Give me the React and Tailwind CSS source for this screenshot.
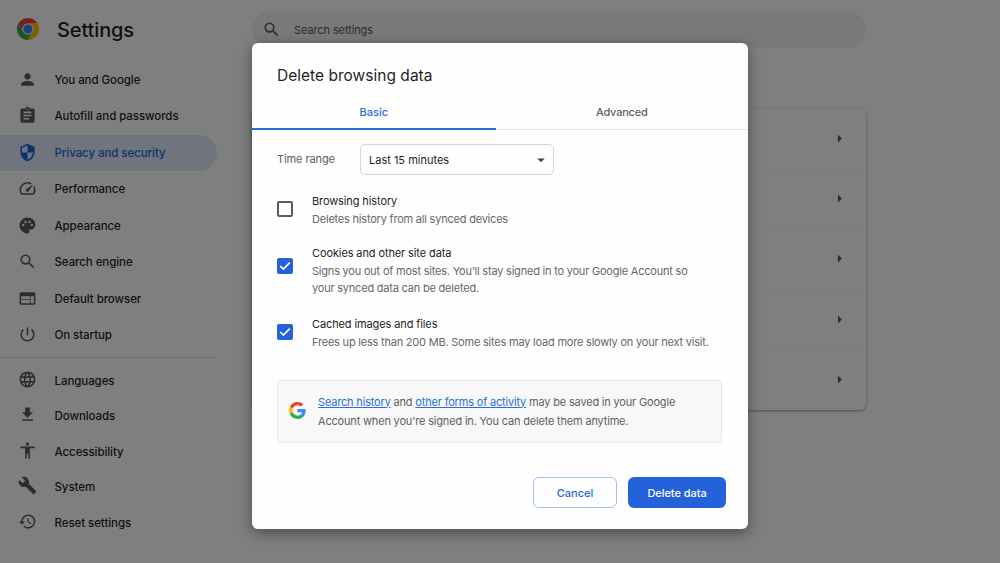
import React from 'react';
import {
  MdPerson,
  MdAssignment,
  MdSecurity,
  MdSpeed,
  MdPalette,
  MdSearch,
  MdWeb,
  MdPowerSettingsNew,
  MdLanguage,
  MdFileDownload,
  MdAccessibility,
  MdBuild,
  MdHistory,
  MdArrowDropDown,
  MdArrowRight,
} from 'react-icons/md';

const mainItems = [
  { label: 'You and Google', icon: MdPerson },
  { label: 'Autofill and passwords', icon: MdAssignment },
  { label: 'Privacy and security', icon: MdSecurity, active: true },
  { label: 'Performance', icon: MdSpeed },
  { label: 'Appearance', icon: MdPalette },
  { label: 'Search engine', icon: MdSearch },
  { label: 'Default browser', icon: MdWeb },
  { label: 'On startup', icon: MdPowerSettingsNew },
];

const moreItems = [
  { label: 'Languages', icon: MdLanguage },
  { label: 'Downloads', icon: MdFileDownload },
  { label: 'Accessibility', icon: MdAccessibility },
  { label: 'System', icon: MdBuild },
  { label: 'Reset settings', icon: MdHistory },
];

const ChromeLogo = () => (
  <svg viewBox="0 0 48 48" className="mb-1 h-[22px] w-[22px]">
    <path fill="#ea4335" d="M24 12h20.8A24 24 0 0 0 3.2 12l10.4 18A12 12 0 0 1 24 12z" />
    <path fill="#34a853" d="M34.4 30 24 48A24 24 0 0 1 3.2 12l10.4 18a12 12 0 0 0 20.8 0z" />
    <path fill="#fbbc04" d="M24 12h20.8A24 24 0 0 1 24 48l10.4-18A12 12 0 0 0 24 12z" />
    <circle cx="24" cy="24" r="12" fill="#e8f0fe" />
    <circle cx="24" cy="24" r="9.8" fill="#3b82f0" />
  </svg>
);

const GoogleLogo = () => (
  <svg viewBox="0 0 48 48" className="mb-[3px] h-[17px] w-[17px] shrink-0">
    <path fill="#ea4335" d="M24 9.5c3.54 0 6.71 1.22 9.21 3.6l6.85-6.85C35.9 2.38 30.47 0 24 0 14.62 0 6.51 5.38 2.56 13.22l7.98 6.19C12.43 13.72 17.74 9.5 24 9.5z" />
    <path fill="#4285f4" d="M46.98 24.55c0-1.57-.15-3.09-.38-4.55H24v9.02h12.94c-.58 2.96-2.26 5.48-4.78 7.18l7.73 6c4.51-4.18 7.09-10.36 7.09-17.65z" />
    <path fill="#fbbc05" d="M10.53 28.59c-.48-1.45-.76-2.99-.76-4.59s.27-3.14.76-4.59l-7.98-6.19C.92 16.46 0 20.12 0 24c0 3.88.92 7.54 2.56 10.78l7.97-6.19z" />
    <path fill="#34a853" d="M24 48c6.48 0 11.93-2.13 15.89-5.81l-7.73-6c-2.15 1.45-4.92 2.3-8.16 2.3-6.26 0-11.57-4.22-13.47-9.91l-7.98 6.19C6.51 42.62 14.62 48 24 48z" />
  </svg>
);

const NavItem = ({ item, iconMargin }) => {
  const Icon = item.icon;
  return (
    <div
      className={`flex h-[35.5px] items-center ${
        item.active ? 'w-[217px] rounded-r-full bg-[#dfe9fb] text-[#1b66dd]' : 'text-[#1f1f1f]'
      }`}
    >
      <Icon
        className={`${iconMargin} ml-[18px] mr-[17.5px] h-[19px] w-[19px] ${item.active ? '' : 'text-[#5a5a5a]'}`}
      />
      <span className="pt-px">{item.label}</span>
    </div>
  );
};

const Checkbox = ({ checked }) => (
  <div
    className={`flex h-4 w-4 shrink-0 items-center justify-center rounded-[2px] ${
      checked ? 'bg-[#2462dc]' : 'border-2 border-[#5a5a5a]'
    }`}
  >
    {checked && (
      <svg viewBox="0 0 16 16" className="h-4 w-4" fill="none" stroke="#fff" strokeWidth="1.7">
        <path d="M3.2 8l3.2 3.1L12.8 4.6" />
      </svg>
    )}
  </div>
);

const Option = ({ title, checked, children }) => (
  <>
    <Checkbox checked={checked} />
    <div className="whitespace-nowrap text-[11px]">
      <div className="leading-[18px] tracking-[-0.11px] text-[#1f1f1f]">{title}</div>
      <div className="pt-px leading-[17px] tracking-[-0.21px] text-[#66676b]">{children}</div>
    </div>
  </>
);

const Sidebar = () => (
  <div className="w-[252px] shrink-0 text-[11.5px] font-medium tracking-[-0.07px]">
    <div className="flex h-[62px] items-center pl-[17px]">
      <ChromeLogo />
      <h1 className="mb-[2px] ml-[18px] text-[20px] font-medium tracking-[-0.12px] text-[#1f1f1f]">Settings</h1>
    </div>
    <div className="flex flex-col gap-px">
      {mainItems.map((item) => (
        <NavItem key={item.label} item={item} iconMargin="mb-px" />
      ))}
    </div>
    <div className="mt-[4px] h-px w-[216px] bg-[#dcdcdc]" />
    <div className="mt-[5px]">
      {moreItems.map((item) => (
        <NavItem key={item.label} item={item} iconMargin="mb-[3px]" />
      ))}
    </div>
  </div>
);

const Dialog = () => (
  <div className="absolute left-[251.5px] top-[43px] flex h-[486px] w-[496px] flex-col rounded-[6px] bg-[#fefefe] pl-[25.5px] shadow-[0_4px_14px_rgba(0,0,0,0.4)]">
    <h2 className="mt-[22px] text-[15.5px] leading-[22px] tracking-[0.02px] text-[#1f1f1f]">Delete browsing data</h2>

    {/* Tabs */}
    <div className="-ml-[25.5px] mt-[8px] flex h-[35px] text-center text-[11px] font-medium leading-[34px]">
      <div className="w-[244.5px] border-b-2 border-[#2b6edb] text-[#2b6edb]">Basic</div>
      <div className="flex-1 border-b border-[#e2e2e2] tracking-[-0.2px] text-[#5f6064]">Advanced</div>
    </div>

    <div className="mt-[14px] flex items-center text-[11px]">
      <span className="w-[83px] tracking-[-0.1px] text-[#5f6064]">Time range</span>
      <div className="flex h-[31px] w-[194px] items-center justify-between rounded-[5px] border border-[#d6d6d6] pl-2 pr-[3px] text-[#1f1f1f]">
        <span className="pt-px">Last 15 minutes</span>
        <MdArrowDropDown className="h-[18px] w-[18px] text-[#444]" />
      </div>
    </div>

    <div className="mt-[17px] flex h-[36px] gap-[19px] [&>:first-child]:mt-[9px]">
      <Option title="Browsing history">Deletes history from all synced devices</Option>
    </div>
    <div className="mt-[16px] flex h-[52px] gap-[19px] [&>:first-child]:mt-[14px]">
      <Option title="Cookies and other site data" checked>
        Signs you out of most sites. You’ll stay signed in to your Google Account so
        <br />
        your synced data can be deleted.
      </Option>
    </div>
    <div className="mt-[19px] flex h-[36px] gap-[19px] [&>:first-child]:mt-[9px]">
      <Option title="Cached images and files" checked>
        Frees up less than 200 MB. Some sites may load more slowly on your next visit.
      </Option>
    </div>

    <div className="mt-[29px] flex h-[63px] w-[445px] items-center gap-3 rounded-[4px] border border-[#e9e9e9] bg-[#f8f8f8] pl-[11px] text-[11px] leading-[19px] tracking-[-0.18px] text-[#5f6064]">
      <GoogleLogo />
      <div className="whitespace-nowrap">
        <span className="text-[#2b6edb] underline">Search history</span> and{' '}
        <span className="text-[#2b6edb] underline">other forms of activity</span> may be saved in your Google
        <br />
        Account when you're signed in. You can delete them anytime.
      </div>
    </div>

    <div className="mr-[21.5px] mt-[34px] flex justify-end gap-[11px] text-[11px] font-medium">
      <button className="h-[31px] w-[84px] rounded-[6px] border border-[#a3c0f2] pt-px text-[#2b66cf]">Cancel</button>
      <button className="h-[31px] w-[98px] rounded-[6px] bg-[#2462dc] pt-px tracking-[-0.05px] text-white">Delete data</button>
    </div>
  </div>
);

const App = () => {
  return (
    <div className="relative h-[563px] w-[1000px] overflow-hidden bg-white font-['Inter',sans-serif]">
      <div className="flex">
        <Sidebar />
        <div className="w-[614px] pt-[11px]">
          <div className="flex h-[37px] items-center rounded-full bg-[#f0f2f7] pl-[10px] text-[11px] tracking-[-0.1px] text-[#5a5a5a]">
            <MdSearch className="mb-px mr-[13px] h-[19px] w-[19px]" />
            <span className="pt-px">Search settings</span>
          </div>
          <div className="mt-[61px] divide-y divide-[#f6f6f6] rounded-[6px] bg-white shadow-[0_1px_3px_rgba(0,0,0,0.4)]">
            {[0, 1, 2, 3, 4].map((row) => (
              <div key={row} className="flex h-[60.2px] items-center justify-end pr-[17px]">
                <MdArrowRight className="h-[19px] w-[19px] text-[#555]" />
              </div>
            ))}
          </div>
        </div>
      </div>

      {/* Backdrop behind the dialog */}
      <div className="absolute inset-0 bg-black/50" />
      <Dialog />
    </div>
  );
};

export default App;
